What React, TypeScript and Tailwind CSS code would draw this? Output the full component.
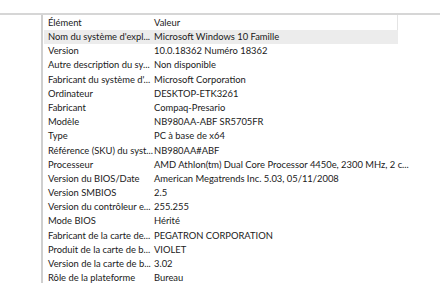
const rows: [string, string][] = [
  ["Nom du système d'expl...", "Microsoft Windows 10 Famille"],
  ["Version", "10.0.18362 Numéro 18362"],
  ["Autre description du sy...", "Non disponible"],
  ["Fabricant du système d'...", "Microsoft Corporation"],
  ["Ordinateur", "DESKTOP-ETK3261"],
  ["Fabricant", "Compaq-Presario"],
  ["Modèle", "NB980AA-ABF SR5705FR"],
  ["Type", "PC à base de x64"],
  ["Référence (SKU) du syst...", "NB980AA#ABF"],
  ["Processeur", "AMD Athlon(tm) Dual Core Processor 4450e, 2300 MHz, 2 c..."],
  ["Version du BIOS/Date", "American Megatrends Inc. 5.03, 05/11/2008"],
  ["Version SMBIOS", "2.5"],
  ["Version du contrôleur e...", "255.255"],
  ["Mode BIOS", "Hérité"],
  ["Fabricant de la carte de...", "PEGATRON CORPORATION"],
  ["Produit de la carte de b...", "VIOLET"],
  ["Version de la carte de b...", "3.02"],
  ["Rôle de la plateforme", "Bureau"],
];

function Row({ name, value, selected }: { name: string; value: string; selected?: boolean }) {
  return (
    <div
      className={
        "flex h-[14.2px] w-[354px] whitespace-nowrap leading-[14.2px] " +
        (selected ? "bg-[#ececec]" : "")
      }
    >
      <div className="w-[110px] shrink-0 pl-[4px]">{name}</div>
      <div>{value}</div>
    </div>
  );
}

export default function App() {
  return (
    <div
      className="h-[283px] w-[440px] overflow-hidden bg-white text-[9.4px] text-[#1a1a1a]"
      style={{ fontFamily: "Lato, \"Noto Sans\", sans-serif" }}
    >
      <div className="h-[13px]" />
      <div className="flex h-[270px] border-t-2 border-[#d6d6d6]">
        {/* tree pane */}
        <div className="w-[43px] shrink-0 border-r-2 border-[#cfcfcf]" />
        {/* details list */}
        <div className="flex-1 pl-[1px]">
          <div className="flex h-[15px] w-[354px] border-r border-[#e4e4e4] leading-[15px]">
            <div className="w-[110px] shrink-0 pl-[4px]">Élément</div>
            <div>Valeur</div>
          </div>
          {rows.map(([name, value], i) => (
            <Row key={name} name={name} value={value} selected={i === 0} />
          ))}
        </div>
      </div>
    </div>
  );
}
